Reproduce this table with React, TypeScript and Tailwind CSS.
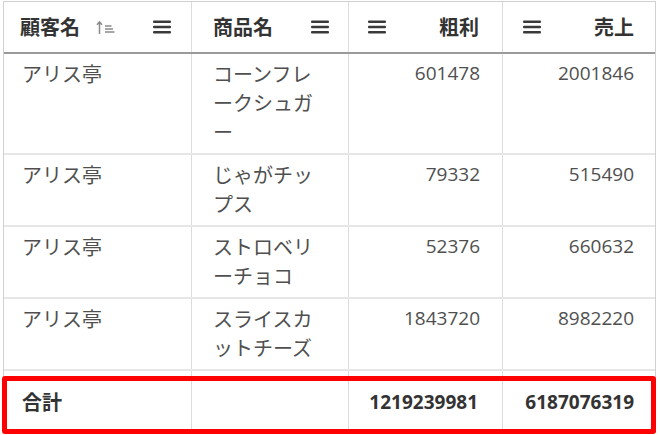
import React from "react";

const jp = { fontFamily: '"Noto Sans CJK JP", "Noto Sans", sans-serif' };
const num = { fontFamily: '"Open Sans", "Noto Sans CJK JP", sans-serif' };

function Menu() {
  return (
    <svg width="20" height="16" viewBox="0 0 20 16" className="shrink-0">
      <rect x="1" y="1.5" width="18" height="2.6" rx="1" fill="#3a3a3a" />
      <rect x="1" y="6.7" width="18" height="2.6" rx="1" fill="#3a3a3a" />
      <rect x="1" y="11.9" width="18" height="2.6" rx="1" fill="#3a3a3a" />
    </svg>
  );
}

function SortIcon() {
  return (
    <svg width="22" height="15" viewBox="0 0 22 15" className="shrink-0">
      <path d="M3.5 14V2M1 4.8L3.5 1.8L6 4.8" stroke="#8a8a8a" strokeWidth="1.5" fill="none" />
      <path d="M9 6H15.5M9 9H17M9 12H18.5" stroke="#8a8a8a" strokeWidth="1.3" />
    </svg>
  );
}

const rows = [
  { c: "アリス亭", p: "コーンフレークシュガー", g: "601478", s: "2001846" },
  { c: "アリス亭", p: "じゃがチップス", g: "79332", s: "515490" },
  { c: "アリス亭", p: "ストロベリーチョコ", g: "52376", s: "660632" },
  { c: "アリス亭", p: "スライスカットチーズ", g: "1843720", s: "8982220" },
];

export default function App() {
  return (
    <div className="w-[660px] h-[435px] bg-white overflow-hidden pt-[1px] pl-[3px]">
      <div className="relative w-[653px] border border-[#d0d0d0] border-b-0">
        {/* header */}
        <div className="grid grid-cols-[187px_157px_154px_153px] h-[52px] border-b-2 border-[#9a9a9a] text-[#333] font-bold text-[20px]" style={jp}>
          <div className="flex items-center pl-4 pr-[19px]">
            <span>顧客名</span>
            <span className="ml-[16px]"><SortIcon /></span>
            <span className="ml-auto"><Menu /></span>
          </div>
          <div className="flex items-center justify-between border-l border-[#dcdcdc] pl-[21px] pr-[18px]">
            <span>商品名</span>
            <Menu />
          </div>
          <div className="flex items-center justify-between border-l border-[#dcdcdc] pl-[18px] pr-[23px]">
            <Menu />
            <span>粗利</span>
          </div>
          <div className="flex items-center justify-between border-l border-[#dcdcdc] pl-[19px] pr-[21px]">
            <Menu />
            <span>売上</span>
          </div>
        </div>
        {/* body */}
        {rows.map((r, i) => (
          <div key={i} className="grid grid-cols-[187px_157px_154px_153px] border-b-2 border-[#e6e6e6] text-[20px] leading-[29px] text-[#4f4f4f]">
            <div className="pl-[18px] pr-4 pt-[5px] pb-[7px]" style={jp}>{r.c}</div>
            <div className="border-l border-[#dcdcdc] pl-[21px] pr-5 pt-[5px] pb-[7px]" style={jp}>{r.p}</div>
            <div className="border-l border-[#dcdcdc] pr-[22px] pt-[5px] pb-[7px] text-right text-[19px]" style={num}>{r.g}</div>
            <div className="border-l border-[#dcdcdc] pr-[21px] pt-[5px] pb-[7px] text-right text-[19px]" style={num}>{r.s}</div>
          </div>
        ))}
        {/* total */}
        <div className="grid grid-cols-[187px_157px_154px_153px] h-[62px] text-[#333] font-bold">
          <div className="flex items-center pl-[18px] text-[20px]" style={jp}>合計</div>
          <div className="border-l border-[#dcdcdc]" />
          <div className="flex items-center justify-end border-l border-[#dcdcdc] pr-[24px] text-[19px]" style={num}>1219239981</div>
          <div className="flex items-center justify-end border-l border-[#dcdcdc] pr-[21px] text-[19px]" style={num}>6187076319</div>
        </div>
        <div className="absolute left-[-2px] right-[-1px] bottom-[-1px] h-[58px] border-[5px] border-[#ff0000] rounded-[3px]" />
      </div>
    </div>
  );
}
